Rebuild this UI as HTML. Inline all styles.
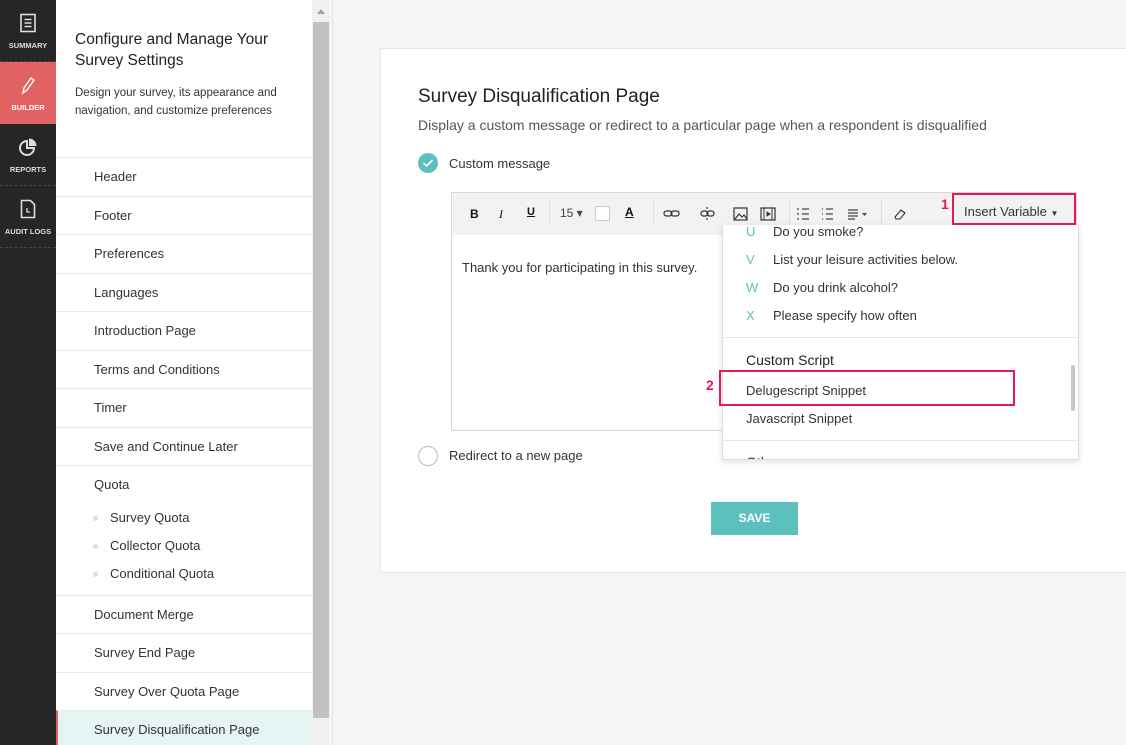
<!DOCTYPE html>
<html style="overflow:hidden;height:745px"><head><meta charset="utf-8"><style>
*{margin:0;padding:0;box-sizing:border-box}
body{width:1126px;height:745px;overflow:hidden;font-family:"Liberation Sans",sans-serif;background:#f5f5f5;position:relative;color:#333}
.nav{position:absolute;left:0;top:0;width:56px;height:745px;background:#262626}
.nv{height:62px;color:#ddd;font-size:7.5px;font-weight:bold;text-align:center;border-bottom:1px dashed #444;padding-top:13px}
.nv svg{display:block;margin:0 auto 8px}
.nv.act{background:#e06262;color:#fff;border:none}
.panel{position:absolute;left:56px;top:0;width:256px;height:745px;background:#fff;overflow:hidden}
.ph{padding:29px 19px 0;height:157px}
.ph h1{font-size:15.5px;font-weight:normal;line-height:21px;color:#222}
.ph p{font-size:11.5px;line-height:18px;margin-top:13px;color:#333}
.it{height:38.5px;border-top:1px solid #eaeaea;font-size:13px;padding-left:38px;line-height:37px;color:#333}
.sub{font-size:13px;padding-left:54px;height:28px;line-height:28px;position:relative}
.sub:before{content:"";position:absolute;left:37px;top:12px;width:5px;height:5px;border-radius:50%;background:#ddd}
.sb{position:absolute;left:312px;top:0;width:18px;height:745px;background:#f1f1f1}
.thumb{position:absolute;left:1px;top:22px;width:16px;height:696px;background:#c1c1c1}
.card{position:absolute;left:380px;top:48px;width:746px;height:525px;background:#fff;border:1px solid #e6e6e6;border-right:none}
.t{position:absolute;color:#333}
</style></head><body>
<div class="nav">
<div class="nv"><svg width="18" height="20" viewBox="0 0 18 20"><rect x="2" y="1.5" width="14" height="17" fill="none" stroke="#ddd" stroke-width="1.6"/><path d="M5.5 6.5h7M5.5 10h7M5.5 13.5h7" stroke="#ddd" stroke-width="1.4"/></svg>SUMMARY</div>
<div class="nv act"><svg width="18" height="20" viewBox="0 0 18 20"><path d="M4 18l1-5 7-10 3 2-7 10z" fill="none" stroke="#fff" stroke-width="1.4"/></svg>BUILDER</div>
<div class="nv"><svg width="20" height="20" viewBox="0 0 20 20"><path d="M9 4a7 7 0 1 0 7 7H9z" fill="none" stroke="#ddd" stroke-width="2"/><path d="M11 1.5v7.5h7.5a7.5 7.5 0 0 0-7.5-7.5z" fill="#ddd"/></svg>REPORTS</div>
<div class="nv"><svg width="18" height="20" viewBox="0 0 18 20"><path d="M2.5 1.5h9l4 4v13h-13z" fill="none" stroke="#ddd" stroke-width="1.6"/><path d="M8 9v4h3" stroke="#ddd" stroke-width="1.3" fill="none"/></svg>AUDIT LOGS</div>
</div>
<div class="panel">
<div class="ph"><h1>Configure and Manage Your Survey Settings</h1><p>Design your survey, its appearance and navigation, and customize preferences</p></div>
<div class="it">Header</div><div class="it">Footer</div><div class="it">Preferences</div><div class="it">Languages</div><div class="it">Introduction Page</div><div class="it">Terms and Conditions</div><div class="it">Timer</div><div class="it">Save and Continue Later</div>
<div class="it">Quota</div>
<div class="sub">Survey Quota</div><div class="sub">Collector Quota</div><div class="sub">Conditional Quota</div>
<div class="it" style="margin-top:7px">Document Merge</div><div class="it">Survey End Page</div><div class="it">Survey Over Quota Page</div>
<div class="it" style="background:#e6f4f4;border-left:2px solid #e06262;padding-left:36px;height:45px">Survey Disqualification Page</div>
</div>
<div class="sb"><div style="position:absolute;left:5px;top:9px;border:4px solid transparent;border-bottom:5px solid #a3a3a3;border-top:0"></div><div class="thumb"></div></div>
<div style="position:absolute;left:332px;top:0;width:1px;height:745px;background:#e3e3e3"></div>
<div class="card"></div>
<div class="t" style="left:418px;top:86px;font-size:19px;color:#222">Survey Disqualification Page</div>
<div class="t" style="left:418px;top:117px;font-size:14px;color:#555">Display a custom message or redirect to a particular page when a respondent is disqualified</div>
<div style="position:absolute;left:418px;top:153px;width:20px;height:20px;border-radius:50%;background:#5bc0be"><svg width="20" height="20"><path d="M5.5 10l3 3 6-6" stroke="#fff" stroke-width="1.6" fill="none"/></svg></div>
<div class="t" style="left:449px;top:156px;font-size:13px">Custom message</div>
<div style="position:absolute;left:451px;top:192px;width:626px;height:239px;border:1px solid #d8d8d8;background:#fff"></div>
<div style="position:absolute;left:452px;top:193px;width:624px;height:42px;background:#f2f2f2"></div>
<div class="t" style="left:470px;top:207px;font-size:12px;font-weight:bold;color:#111">B</div>
<div class="t" style="left:499px;top:207px;font-size:12px;font-style:italic;font-family:'Liberation Serif';color:#111">I</div>
<div class="t" style="left:527px;top:206px;font-size:11px;text-decoration:underline;font-weight:bold;color:#111">U</div>
<div style="position:absolute;left:549px;top:201px;width:1px;height:24px;background:#ddd"></div>
<div class="t" style="left:560px;top:206px;font-size:12px;color:#444">15 ▾</div>
<div style="position:absolute;left:595px;top:206px;width:15px;height:15px;border:1px solid #ccc;background:#fff"></div>
<div class="t" style="left:625px;top:205px;font-size:12px;font-weight:bold;text-decoration:underline;color:#111">A</div>
<div style="position:absolute;left:653px;top:201px;width:1px;height:24px;background:#ddd"></div>
<svg style="position:absolute;left:663px;top:206px" width="100" height="16"><g stroke="#333" fill="none" stroke-width="1.2"><rect x="1" y="5" width="8" height="5" rx="2.5"/><rect x="8" y="5" width="8" height="5" rx="2.5"/><rect x="38" y="5" width="7" height="5" rx="2.5"/><rect x="44" y="5" width="7" height="5" rx="2.5"/><path d="M44 1v2M44 12v2"/><rect x="71" y="2" width="13" height="12"/><path d="M72 13l4-5 3 3 2-2 3 4"/></g></svg>
<svg style="position:absolute;left:760px;top:206px" width="16" height="16"><rect x="1" y="2" width="14" height="12" fill="none" stroke="#333" stroke-width="1.2"/><path d="M4 2v12M12 2v12M7 6l3 2-3 2z" stroke="#333" fill="#333"/></svg>
<div style="position:absolute;left:789px;top:201px;width:1px;height:24px;background:#ddd"></div>
<svg style="position:absolute;left:796px;top:206px" width="80" height="16"><g stroke="#444" stroke-width="1.2"><path d="M1 3h2M6 3h7M1 8h2M6 8h7M1 13h2M6 13h7M26 3h1M30 3h7M26 8h1M30 8h7M26 13h1M30 13h7M52 4h10M52 7h10M52 10h10M52 13h7"/></g><path d="M66 7h5l-2.5 3z" fill="#444"/></svg>
<div style="position:absolute;left:881px;top:201px;width:1px;height:24px;background:#ddd"></div>
<svg style="position:absolute;left:893px;top:207px" width="14" height="14"><path d="M2 10l6-7 4 3-5 6H3z" fill="none" stroke="#333" stroke-width="1.1"/></svg>
<div style="position:absolute;left:952px;top:193px;width:124px;height:32px;border:2px solid #e8194f;background:#f2f2f2"></div>
<div class="t" style="left:964px;top:204px;font-size:13px;color:#333">Insert Variable <span style="font-size:8px">▼</span></div>
<div class="t" style="left:941px;top:196px;font-size:14px;font-weight:bold;color:#e8194f">1</div>
<div class="t" style="left:462px;top:260px;font-size:13px">Thank you for participating in this survey.</div>
<div style="position:absolute;left:722px;top:225px;width:357px;height:235px;background:#fff;border:1px solid #ddd;border-top:none;box-shadow:0 2px 6px rgba(0,0,0,.12);overflow:hidden;font-size:13px">
<div style="position:absolute;left:23px;top:-1px;color:#5bc0be">U</div><div style="position:absolute;left:50px;top:-1px">Do you smoke?</div>
<div style="position:absolute;left:23px;top:27px;color:#5bc0be">V</div><div style="position:absolute;left:50px;top:27px">List your leisure activities below.</div>
<div style="position:absolute;left:23px;top:55px;color:#5bc0be">W</div><div style="position:absolute;left:50px;top:55px">Do you drink alcohol?</div>
<div style="position:absolute;left:23px;top:83px;color:#5bc0be">X</div><div style="position:absolute;left:50px;top:83px">Please specify how often</div>
<div style="position:absolute;left:0;top:112px;width:357px;height:1px;background:#e6e6e6"></div>
<div style="position:absolute;left:23px;top:127px;font-size:14px;color:#222">Custom Script</div>
<div style="position:absolute;left:23px;top:158px">Delugescript Snippet</div>
<div style="position:absolute;left:23px;top:186px">Javascript Snippet</div>
<div style="position:absolute;left:0;top:215px;width:357px;height:1px;background:#e6e6e6"></div>
<div style="position:absolute;left:23px;top:229px;font-size:14px">Other</div>
<div style="position:absolute;left:348px;top:140px;width:4px;height:46px;border-radius:2px;background:#c8c8c8"></div>
</div>
<div style="position:absolute;left:719px;top:370px;width:296px;height:36px;border:2px solid #e8194f"></div>
<div class="t" style="left:706px;top:377px;font-size:14px;font-weight:bold;color:#e8194f">2</div>
<div style="position:absolute;left:418px;top:446px;width:20px;height:20px;border-radius:50%;border:1px solid #bbb;background:#fff"></div>
<div class="t" style="left:449px;top:448px;font-size:13px">Redirect to a new page</div>
<div style="position:absolute;left:711px;top:502px;width:87px;height:33px;background:#5bc0be;color:#fff;font-size:12px;font-weight:bold;text-align:center;line-height:33px">SAVE</div>
</body></html>
